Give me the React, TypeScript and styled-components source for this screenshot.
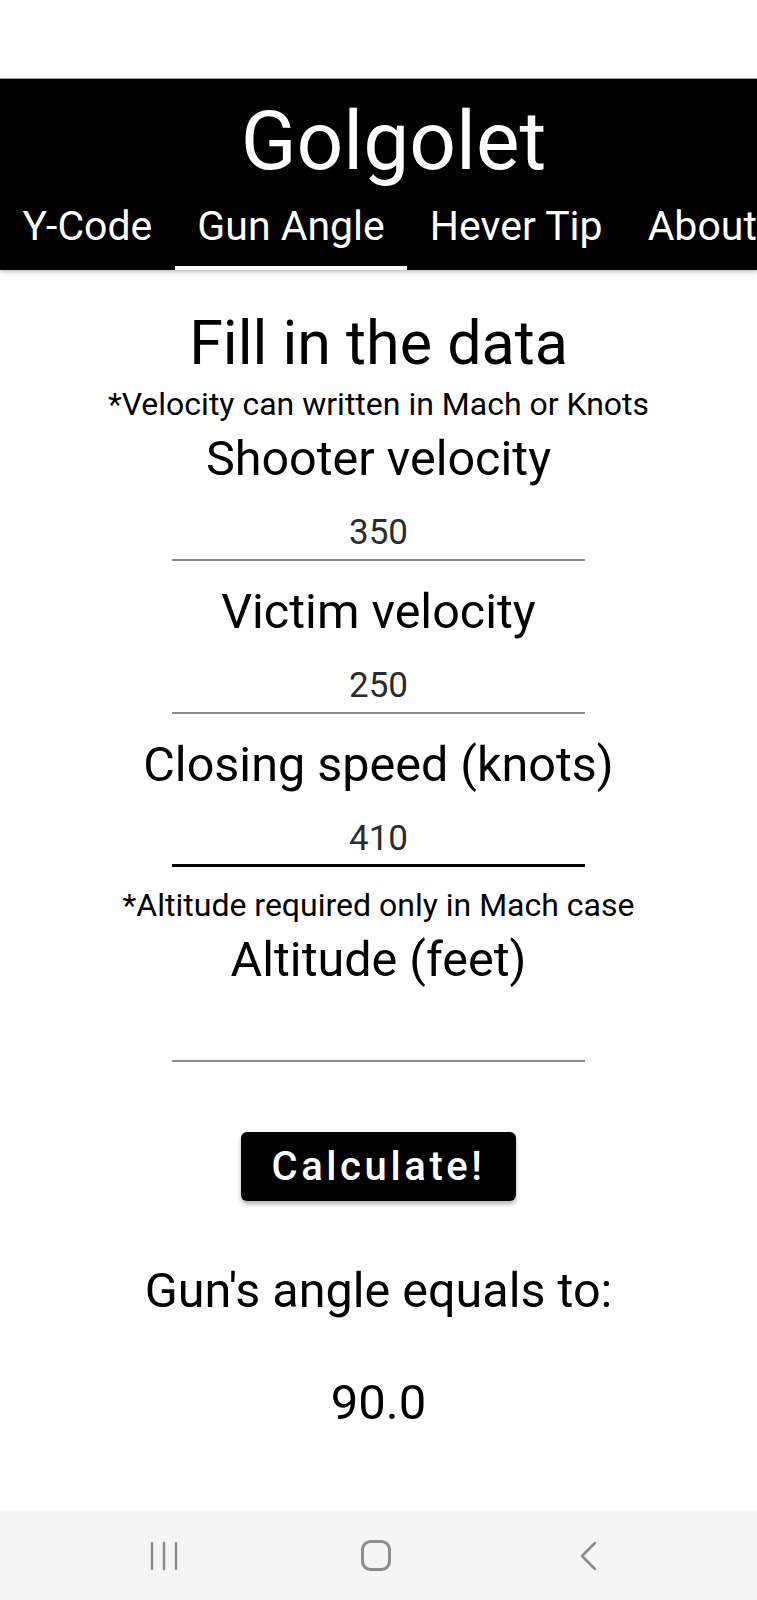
import styled, { createGlobalStyle } from "styled-components";

const GlobalStyle = createGlobalStyle`
    body {
        margin: 0;
        background: #ffffff;
        font-family: Roboto, "Liberation Sans", sans-serif;
    }
`

const tabs = ["Y-Code", "Gun Angle", "Hever Tip", "About"];

const fields = [
    { label: "Shooter velocity", value: "350" },
    { label: "Victim velocity", value: "250" },
    { label: "Closing speed (knots)", value: "410", focused: true },
];

function Field({ label, value, focused }: { label: string; value: string; focused?: boolean }) {
    return (
        <FieldWrapper>
            <FieldLabel>{label}</FieldLabel>
            <FieldInput defaultValue={value} $focused={focused} />
        </FieldWrapper>
    )
}

function App() {
    return (
        <>
            <GlobalStyle />
            <Screen>
                <StatusSpace />
                <Header>
                    <Title>Golgolet</Title>
                    <TabRow>
                        {tabs.map((t) => (
                            <Tab key={t} $active={t === "Gun Angle"}>{t}</Tab>
                        ))}
                    </TabRow>
                </Header>

                <Content>
                    <Heading>Fill in the data</Heading>
                    <Note>*Velocity can written in Mach or Knots</Note>
                    {fields.map((f) => (
                        <Field key={f.label} {...f} />
                    ))}
                    <Note $top={19}>*Altitude required only in Mach case</Note>
                    <Field label="Altitude (feet)" value="" />

                    <CalcButton>Calculate!</CalcButton>

                    <ResultLabel>Gun's angle equals to:</ResultLabel>
                    <ResultValue>90.0</ResultValue>
                </Content>

                <NavBar>
                    <NavSlot>
                        <svg width="28" height="30" viewBox="0 0 28 30">
                            <g stroke="#8c8c8c" strokeWidth="2.4" strokeLinecap="round">
                                <line x1="2" y1="2" x2="2" y2="28" />
                                <line x1="14" y1="2" x2="14" y2="28" />
                                <line x1="26" y1="2" x2="26" y2="28" />
                            </g>
                        </svg>
                    </NavSlot>
                    <NavSlot>
                        <svg width="30" height="31" viewBox="0 0 30 31">
                            <rect x="1.5" y="1.5" width="27" height="28" rx="8" fill="none" stroke="#8c8c8c" strokeWidth="3" />
                        </svg>
                    </NavSlot>
                    <NavSlot>
                        <svg width="20" height="32" viewBox="0 0 20 32">
                            <polyline points="17,3 4,16 17,29" fill="none" stroke="#8c8c8c" strokeWidth="2.6" strokeLinecap="round" strokeLinejoin="round" />
                        </svg>
                    </NavSlot>
                </NavBar>
            </Screen>
        </>
    )
}

const Screen = styled.div`
    display: flex;
    flex-direction: column;
    min-height: 1600px;
    width: 757px;
    overflow: hidden;
`

const StatusSpace = styled.div`
    height: 78px;
    background: #ffffff;
`

const Header = styled.div`
    background: #000000;
    color: #ffffff;
    border-top: 1px solid #9a9a9a;
    box-shadow: 0 2px 4px rgba(0, 0, 0, 0.25);
    position: relative;
    z-index: 1;
`

const Title = styled.div`
    height: 103px;
    line-height: 124px;
    text-align: center;
    padding-left: 30px;
    font-size: 82px;
`

const TabRow = styled.div`
    display: flex;
    height: 88px;
    white-space: nowrap;
`

const Tab = styled.div<{ $active?: boolean }>`
    box-sizing: border-box;
    height: 88px;
    padding: 4px 22.5px 0;
    display: flex;
    align-items: center;
    font-size: 41px;
    color: #ffffff;
    flex-shrink: 0;
    border-bottom: 4px solid ${(p) => (p.$active ? "#ffffff" : "transparent")};
`

const Content = styled.div`
    display: flex;
    flex-direction: column;
    align-items: center;
    padding-top: 38px;
    color: #000000;
`

const Heading = styled.div`
    font-size: 61px;
    line-height: 70px;
`

const Note = styled.div<{ $top?: number }>`
    font-size: 32px;
    line-height: 38px;
    margin-top: ${(p) => p.$top ?? 7}px;
`

const FieldWrapper = styled.div`
    display: flex;
    flex-direction: column;
    align-items: center;
    margin-top: 8px;

    & + & {
        margin-top: 23px;
    }
`

const FieldLabel = styled.div`
    font-size: 48.5px;
    line-height: 56px;
`

const FieldInput = styled.input<{ $focused?: boolean }>`
    box-sizing: border-box;
    width: 413px;
    height: 54px;
    margin-top: 20px;
    padding: ${(p) => (p.$focused ? "0 0 0" : "0 0 1px")};
    border: none;
    border-bottom: ${(p) => (p.$focused ? "3px solid #000000" : "2px solid #8a8a8a")};
    background: transparent;
    outline: none;
    text-align: center;
    font-family: Roboto, "Liberation Sans", sans-serif;
    font-size: 35px;
    color: #2b2b2b;
`

const CalcButton = styled.button`
    box-sizing: border-box;
    width: 275px;
    height: 69px;
    margin-top: 70px;
    border: none;
    border-radius: 6px;
    background: #000000;
    color: #ffffff;
    font-family: Roboto, "Liberation Sans", sans-serif;
    font-weight: 500;
    font-size: 40px;
    letter-spacing: 0.09em;
    box-shadow: 0 3px 4px rgba(0, 0, 0, 0.3);
`

const ResultLabel = styled.div`
    font-size: 48.5px;
    line-height: 56px;
    margin-top: 62px;
`

const ResultValue = styled.div`
    font-size: 49px;
    line-height: 56px;
    margin-top: 56px;
`

const NavBar = styled.div`
    margin-top: auto;
    height: 89px;
    background: #f5f5f5;
    display: grid;
    grid-template-columns: repeat(3, 212px);
    align-items: center;
    padding-left: 58px;
`

const NavSlot = styled.div`
    display: flex;
    justify-content: center;
    align-items: center;
`

export default App;
